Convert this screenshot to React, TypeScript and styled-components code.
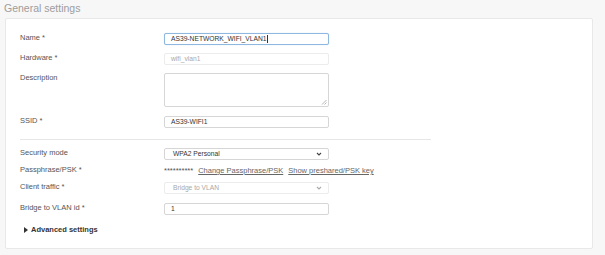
import React from "react";
import styled, { createGlobalStyle } from "styled-components";

const GlobalStyle = createGlobalStyle`
  html, body {
    margin: 0;
    padding: 0;
    background: #f7f7f7;
    font-family: "Liberation Sans", Arial, sans-serif;
  }
`;

const Page = styled.div`
  width: 605px;
  height: 255px;
  padding: 2px 12px 0 5px;
  box-sizing: border-box;
`;

const Title = styled.div`
  font-size: 10.5px;
  line-height: 13px;
  color: #9d9d9d;
  margin: 0 0 3px -1px;
  height: 13px;
`;

const Card = styled.div`
  background: #fff;
  border: 1px solid #e8e8e8;
  border-radius: 2px;
  height: 231px;
  box-sizing: border-box;
  padding: 14px 14px 0 14px;
`;

const Row = styled.div<{ $top?: number; $align?: string }>`
  display: flex;
  align-items: ${(p) => p.$align || "center"};
  margin-top: ${(p) => p.$top ?? 8}px;
`;

const Label = styled.div`
  width: 144px;
  flex-shrink: 0;
  font-size: 7.5px;
  color: #555;
  margin-top: -3px;
`;

const TopLabel = styled(Label)`
  margin-top: 0;
`;

const Input = styled.div<{ $focus?: boolean; $disabled?: boolean; $select?: boolean }>`
  width: 165px;
  height: 12px;
  box-sizing: border-box;
  border: 1px solid ${(p) => (p.$focus ? "#8fb8e0" : p.$disabled ? "#ececec" : "#d6d6d6")};
  box-shadow: ${(p) => (p.$focus ? "0 0 1px #b5d3f0" : "none")};
  border-radius: 2px;
  font-size: 6.7px;
  line-height: 10px;
  color: ${(p) => (p.$disabled ? "#a8a8a8" : "#333")};
  padding: 0 6px 0 ${(p) => (p.$select ? 8 : 6)}px;
  display: flex;
  align-items: center;
  justify-content: space-between;
  background: #fff;
`;

const TextArea = styled(Input)`
  height: 34px;
  position: relative;
`;

const Grip = styled.svg`
  position: absolute;
  right: 1px;
  bottom: 1px;
`;

const Caret = styled.span`
  display: inline-block;
  width: 1px;
  height: 8px;
  background: #333;
  vertical-align: middle;
`;

const Divider = styled.div`
  width: 411px;
  height: 1px;
  background: #e6e6e6;
  margin-top: 11px;
`;

const PskRow = styled.div`
  display: flex;
  align-items: center;
  gap: 5px;
  font-size: 7.5px;
  color: #666;
`;

const Stars = styled.span`
  color: #555;
`;

const LinkText = styled.a`
  color: #666;
  text-decoration: underline;
  cursor: pointer;
`;

const Advanced = styled.div`
  display: flex;
  align-items: center;
  gap: 3px;
  margin: 10px 0 0 4px;
  font-size: 7.5px;
  color: #333;
  font-weight: 600;
`;

const Chevron = ({ color }: { color: string }) => (
  <svg width="6" height="4" viewBox="0 0 6 4">
    <path d="M1 1 L3 3 L5 1" fill="none" stroke={color} strokeWidth="1.1" />
  </svg>
);

export default function App() {
  return (
    <Page>
      <GlobalStyle />
      <Title>General settings</Title>
      <Card>
        <Row $top={0}>
          <Label>Name *</Label>
          <Input $focus>
            <span>
              AS39-NETWORK_WIFI_VLAN1<Caret />
            </span>
          </Input>
        </Row>
        <Row>
          <Label>Hardware *</Label>
          <Input $disabled>wifi_vlan1</Input>
        </Row>
        <Row $align="flex-start">
          <TopLabel>Description</TopLabel>
          <TextArea>
            <Grip width="6" height="6" viewBox="0 0 6 6">
              <path d="M5.5 1 L1 5.5 M5.5 3.5 L3.5 5.5" stroke="#999" strokeWidth="0.7" />
            </Grip>
          </TextArea>
        </Row>
        <Row $top={9}>
          <Label>SSID *</Label>
          <Input>AS39-WIFI1</Input>
        </Row>
        <Divider />
        <Row $top={8}>
          <Label>Security mode</Label>
          <Input $select>
            <span>WPA2 Personal</span>
            <Chevron color="#444" />
          </Input>
        </Row>
        <Row $top={6}>
          <Label>Passphrase/PSK *</Label>
          <PskRow>
            <Stars>**********</Stars>
            <LinkText>Change Passphrase/PSK</LinkText>
            <LinkText>Show preshared/PSK key</LinkText>
          </PskRow>
        </Row>
        <Row $top={7}>
          <Label>Client traffic *</Label>
          <Input $disabled $select>
            <span>Bridge to VLAN</span>
            <Chevron color="#aaa" />
          </Input>
        </Row>
        <Row $top={9}>
          <Label>Bridge to VLAN id *</Label>
          <Input>1</Input>
        </Row>
        <Advanced>
          <svg width="4" height="6" viewBox="0 0 4 6">
            <path d="M0 0 L4 3 L0 6 Z" fill="#333" />
          </svg>
          Advanced settings
        </Advanced>
      </Card>
    </Page>
  );
}
